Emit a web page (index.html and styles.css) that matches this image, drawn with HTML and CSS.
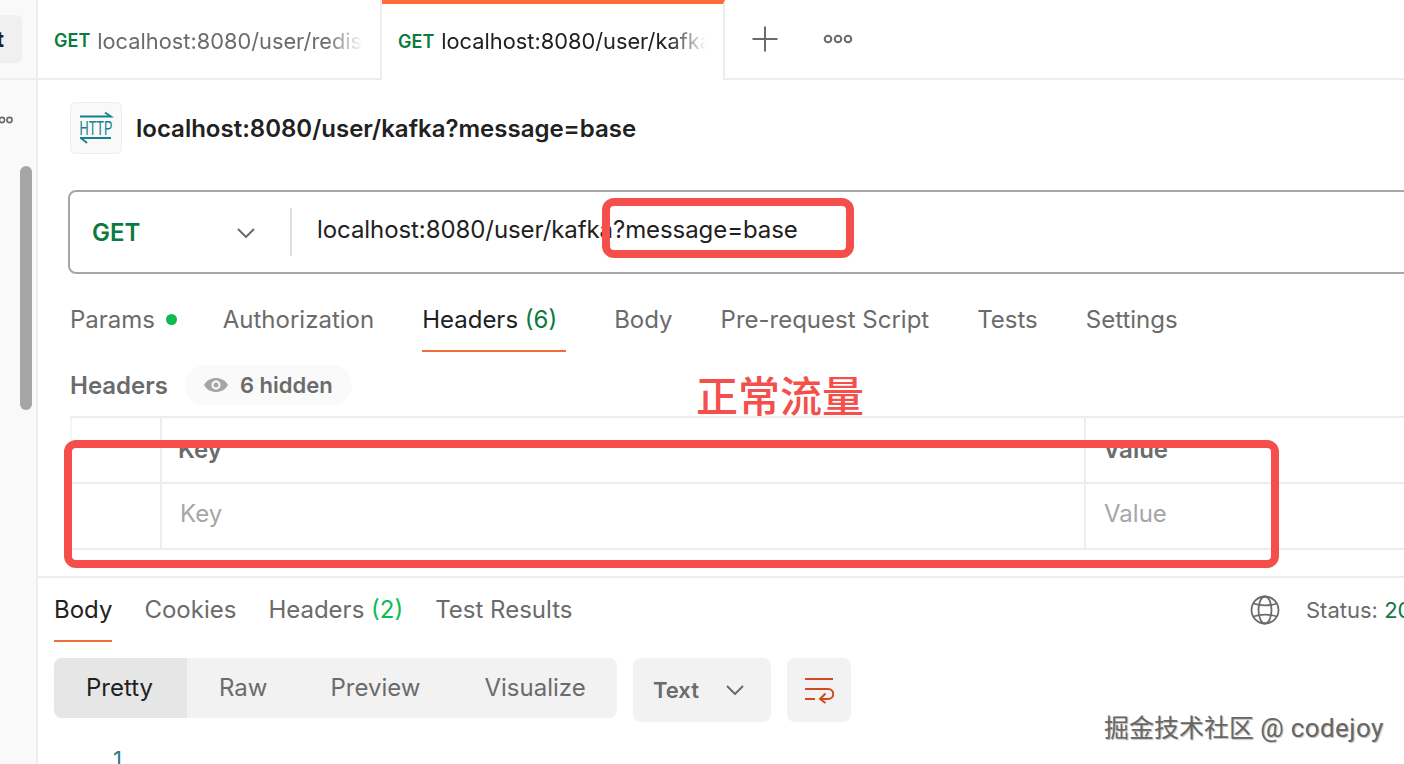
FILE: index.html
```html
<!DOCTYPE html>
<html lang="en">
<head>
  <meta charset="UTF-8">
  <meta name="viewport" content="width=device-width, initial-scale=1.0">
  <title>localhost:8080/user/kafka?message=base</title>
  <link rel="stylesheet" href="styles.css">
</head>
<body>
  <div class="app">
    <aside class="sidebar">
      <div class="sidebar-top">
        <div class="new-btn"><span>t</span></div>
      </div>
      <div class="sidebar-dots">
        <svg width="14" height="10" viewBox="0 0 14 10"><circle cx="2" cy="5" r="2.600"/><circle cx="9.500" cy="5" r="2.600"/></svg>
      </div>
      <div class="sidebar-thumb"></div>
    </aside>

    <main class="main">
      <div class="tabs">
        <div class="tab">
          <span class="tab-method">GET</span>
          <span class="tab-url">localhost:8080/user/redis</span>
        </div>
        <div class="tab tab-active">
          <span class="tab-method">GET</span>
          <span class="tab-url">localhost:8080/user/kafka</span>
        </div>
        <div class="tab-tools">
          <svg class="plus-icon" width="28" height="28" viewBox="0 0 28 28"><path d="M14 1.500V26.500M1.500 14H26.500"/></svg>
          <svg class="more-icon" width="30" height="12" viewBox="0 0 30 12"><circle cx="5" cy="6" r="3.300"/><circle cx="15" cy="6" r="3.300"/><circle cx="25" cy="6" r="3.300"/></svg>
        </div>
      </div>

      <div class="request-title">
        <div class="http-icon">
          <svg width="36" height="34" viewBox="0 0 36 34">
            <path d="M2 5.500H33L27 1.500M2 27H33M3 27L9 32"/>
            <text x="18" y="23.500" text-anchor="middle" textLength="33" lengthAdjust="spacingAndGlyphs">HTTP</text>
          </svg>
        </div>
        <h1>localhost:8080/user/kafka?message=base</h1>
      </div>

      <div class="url-bar">
        <div class="method-select">
          <span>GET</span>
          <svg class="chevron" width="18" height="10" viewBox="0 0 18 10"><path d="M1 1L9 9L17 1"/></svg>
        </div>
        <div class="url-text">localhost:8080/user/kafka?message=base</div>
      </div>

      <nav class="req-tabs">
        <span class="req-tab params-tab">Params <i class="green-dot"></i></span>
        <span class="req-tab">Authorization</span>
        <span class="req-tab req-tab-active">Headers <em>(6)</em></span>
        <span class="req-tab">Body</span>
        <span class="req-tab">Pre-request Script</span>
        <span class="req-tab">Tests</span>
        <span class="req-tab">Settings</span>
      </nav>

      <div class="headers-bar">
        <strong>Headers</strong>
        <div class="hidden-pill">
          <svg width="26" height="16" viewBox="0 0 26 16"><path class="eye-body" fill-rule="evenodd" d="M1 8C4 3 8 1 13 1S22 3 25 8C22 13 18 15 13 15S4 13 1 8ZM13 3.500A4.500 4.500 0 1 0 13 12.500A4.500 4.500 0 1 0 13 3.500Z"/><circle class="eye-body" cx="13" cy="8" r="2.500"/></svg>
          <span>6 hidden</span>
        </div>
      </div>

      <div class="kv-table">
        <div class="kv-row kv-head">
          <div class="kv-cell"></div>
          <div class="kv-cell key-head">Key</div>
          <div class="kv-cell value-head">Value</div>
        </div>
        <div class="kv-row kv-empty">
          <div class="kv-cell"></div>
          <div class="kv-cell key-input">Key</div>
          <div class="kv-cell value-input">Value</div>
        </div>
      </div>

      <section class="response">
        <div class="res-top">
          <nav class="res-tabs">
            <span class="res-tab res-tab-active">Body</span>
            <span class="res-tab">Cookies</span>
            <span class="res-tab">Headers <em>(2)</em></span>
            <span class="res-tab">Test Results</span>
          </nav>
          <div class="res-status">
            <svg class="globe" width="30" height="30" viewBox="0 0 30 30"><circle cx="15" cy="15" r="13.500"/><ellipse cx="15" cy="15" rx="6.500" ry="13.500"/><path d="M3.500 8.500C10 11 20 11 26.500 8.500M3.500 21.500C10 19 20 19 26.500 21.500"/></svg>
            <span>Status: <b>200 OK</b></span>
          </div>
        </div>
        <div class="res-tools">
          <div class="segments">
            <span class="segment segment-active">Pretty</span>
            <span class="segment raw-seg">Raw</span>
            <span class="segment preview-seg">Preview</span>
            <span class="segment">Visualize</span>
          </div>
          <div class="format-select">
            <span>Text</span>
            <svg class="chevron" width="18" height="10" viewBox="0 0 18 10"><path d="M1 1L9 9L17 1"/></svg>
          </div>
          <div class="wrap-btn">
            <svg width="30" height="28" viewBox="0 0 30 28"><path d="M1 3H29M1 13H24C31 13 31 23 24 23H16M21.500 17.500L16 23L21.500 27M1 23H11"/></svg>
          </div>
        </div>
        <div class="code-line">1</div>
      </section>
    </main>

    <div class="mark mark-query"></div>
    <div class="mark mark-table"></div>
    <div class="note">正常流量</div>
    <div class="watermark">掘金技术社区 <span>@ codejoy</span></div>
  </div>
</body>
</html>
```

FILE: styles.css
```css
* {
  box-sizing: border-box;
}
body {
  margin: 0;
  font-family: Inter, "Noto Sans CJK SC", sans-serif;
  color: #212121;
  background-color: #fff;
}
.app {
  position: relative;
  display: flex;
  width: 1404px;
  height: 764px;
  overflow: hidden;
}

/* left sidebar */
.sidebar {
  position: relative;
  flex: 0 0 38px;
  background-color: #f9f9f9;
  border-right: 2px solid #ededed;
}
.sidebar-top {
  height: 80px;
  padding-top: 15px;
  border-bottom: 2px solid #ededed;
}
.new-btn {
  width: 22px;
  height: 48px;
  background-color: #f0f0f0;
  border-radius: 0 6px 6px 0;
  font-size: 22px;
  font-weight: 700;
  line-height: 48px;
  overflow: hidden;
}
.new-btn span {
  margin-left: -4px;
}
.sidebar-dots {
  height: 10px;
  margin-top: 35px;
}
.sidebar-dots svg {
  display: block;
  fill: none;
  stroke: #6b6b6b;
  stroke-width: 1.600;
}
.sidebar-thumb {
  width: 12px;
  height: 244px;
  margin: 41px 0 0 20px;
  background-color: #a6a6a6;
  border-radius: 6px;
}

.main {
  flex: 1;
  min-width: 0;
}

/* tab strip */
.tabs {
  display: flex;
  height: 80px;
}
.tab {
  display: flex;
  align-items: center;
  gap: 7px;
  flex: 0 0 344px;
  min-width: 0;
  padding: 3px 17px 0 16px;
  border-right: 2px solid #ededed;
  border-bottom: 2px solid #ededed;
  color: #6b6b6b;
}
.tab-active {
  flex-basis: 343px;
  border-top: 4px solid #ff6c37;
  border-bottom: 0;
  padding-top: 0;
  padding-bottom: 2px;
  color: #212121;
}
.tab-method {
  font-size: 18px;
  font-weight: 600;
  color: #0b7a3e;
}
.tab-url {
  flex: 1;
  min-width: 0;
  font-size: 21.800px;
  white-space: nowrap;
  overflow: hidden;
  -webkit-mask-image: linear-gradient(to right, #000 86%, transparent 100%);
  mask-image: linear-gradient(to right, #000 86%, transparent 100%);
}
.tab-tools {
  display: flex;
  align-items: center;
  gap: 44px;
  flex: 1;
  padding: 0 0 0 26px;
  border-bottom: 2px solid #ededed;
}
.plus-icon path {
  fill: none;
  stroke: #6b6b6b;
  stroke-width: 2;
}
.more-icon {
  fill: none;
  stroke: #6b6b6b;
  stroke-width: 2;
}

/* request name */
.request-title {
  display: flex;
  align-items: center;
  gap: 14px;
  padding: 22px 0 0 32px;
}
.http-icon {
  display: flex;
  align-items: center;
  justify-content: center;
  width: 52px;
  height: 52px;
  background-color: #f9f9f9;
  border: 1px solid #ededed;
  border-radius: 6px;
}
.http-icon path {
  fill: none;
  stroke: #13818f;
  stroke-width: 1.800;
}
.http-icon text {
  font-family: "Liberation Sans", sans-serif;
  font-size: 20px;
  fill: #13818f;
}
h1 {
  margin: 0;
  font-size: 24px;
  font-weight: 600;
}

/* url input */
.url-bar {
  display: flex;
  align-items: center;
  width: 1400px;
  height: 84px;
  margin: 36px 0 0 30px;
  border: 2px solid #a6a6a6;
  border-radius: 8px;
}
.method-select {
  display: flex;
  align-items: center;
  justify-content: space-between;
  width: 222px;
  height: 48px;
  padding: 1px 35px 0 22px;
  border-right: 2px solid #e0e0e0;
  font-size: 24px;
  font-weight: 600;
  color: #0b7a3e;
}
.chevron path {
  fill: none;
  stroke: #6b6b6b;
  stroke-width: 2;
}
.url-text {
  padding: 0 0 5px 25px;
  font-size: 24px;
  letter-spacing: -0.08px;
}

/* request tabs */
.req-tabs {
  display: flex;
  height: 63px;
  margin-top: 15px;
  padding-left: 32px;
}
.req-tab {
  margin-right: 48px;
  padding-top: 16px;
  font-size: 24px;
  color: #6b6b6b;
}
.req-tab em, .res-tab em {
  font-style: normal;
  color: #0cbb52;
}
.req-tab em {
  color: #0b7a3e;
}
.req-tab-active {
  width: 144px;
  color: #212121;
  border-bottom: 2px solid #f26b3a;
}
.params-tab {
  margin-right: 46px;
}
.green-dot {
  display: inline-block;
  width: 11px;
  height: 11px;
  margin: 0 0 3px 4px;
  background-color: #0cbb52;
  border-radius: 50%;
}

.headers-bar {
  display: flex;
  align-items: center;
  gap: 17px;
  height: 40px;
  margin-top: 13px;
  padding-left: 32px;
  font-size: 24px;
  color: #6b6b6b;
}
.headers-bar strong {
  font-weight: 600;
}
.hidden-pill {
  display: flex;
  align-items: center;
  gap: 11px;
  height: 40px;
  padding: 0 19px 0 18px;
  background-color: #fafafa;
  border-radius: 20px;
  font-size: 22px;
  font-weight: 600;
}
.eye-body {
  fill: #a6a6a6;
}

/* key value table */
.kv-table {
  margin: 11px 0 0 32px;
  border-top: 2px solid #ededed;
}
.kv-row {
  display: grid;
  grid-template-columns: 90px 924px 1fr;
  height: 66px;
  border-bottom: 2px solid #ededed;
}
.kv-cell {
  display: flex;
  align-items: center;
  padding-left: 17px;
  border-left: 2px solid #ededed;
  font-size: 24px;
}
.kv-cell:first-child {
  border-left: 2px solid #f5f5f5;
}
.kv-head .kv-cell {
  padding-bottom: 2px;
}
.kv-empty .kv-cell {
  padding-bottom: 6px;
}
.key-head, .value-head {
  font-weight: 600;
  color: #6b6b6b;
}
.key-head {
  padding-left: 16px;
}
.key-input, .value-input {
  padding-left: 18px;
  color: #a6a6a6;
}

/* response */
.response {
  margin-top: 26px;
  border-top: 2px solid #ededed;
}
.res-top {
  display: flex;
  justify-content: space-between;
  height: 64px;
  padding-left: 16px;
}
.res-tabs {
  display: flex;
  gap: 32px;
}
.res-tab {
  padding-top: 17px;
  font-size: 24px;
  color: #6b6b6b;
}
.res-tab-active {
  color: #212121;
  border-bottom: 2px solid #f26b3a;
}
.res-status {
  display: flex;
  align-items: center;
  gap: 26px;
  width: 154px;
  flex-shrink: 0;
  font-size: 22px;
  white-space: nowrap;
  color: #6b6b6b;
}
.res-status b {
  font-weight: 400;
  color: #0b7a3e;
}
.globe {
  flex-shrink: 0;
  fill: none;
  stroke: #6b6b6b;
  stroke-width: 1.800;
}
.res-tools {
  display: flex;
  align-items: flex-start;
  margin-top: 16px;
  padding-left: 16px;
}
.segments {
  display: flex;
  width: 563px;
  height: 60px;
  background-color: #f2f2f2;
  border-radius: 8px;
  overflow: hidden;
  font-size: 24px;
  color: #6b6b6b;
}
.segment {
  flex-shrink: 0;
  padding: 15px 32px 0;
}
.segment-active {
  width: 133px;
  color: #212121;
  background-color: #e6e6e6;
}
.raw-seg {
  padding-right: 31px;
}
.preview-seg {
  padding-right: 32px;
}
.format-select {
  display: flex;
  align-items: center;
  justify-content: space-between;
  width: 138px;
  height: 64px;
  margin-left: 16px;
  padding: 0 27px 0 20px;
  background-color: #f2f2f2;
  border-radius: 8px;
  font-size: 22px;
  font-weight: 600;
  color: #6b6b6b;
}
.wrap-btn {
  display: flex;
  align-items: center;
  justify-content: center;
  width: 64px;
  height: 64px;
  margin-left: 16px;
  background-color: #f2f2f2;
  border-radius: 8px;
}
.wrap-btn path {
  fill: none;
  stroke: #d2491f;
  stroke-width: 2;
}
.code-line {
  margin: 24px 0 0 75px;
  font-size: 22px;
  color: #2a7a90;
}

/* red marks drawn over the screenshot */
.mark {
  position: absolute;
  border: 8px solid #f44f4a;
  border-radius: 12px;
}
.mark-query {
  left: 602px;
  top: 198px;
  width: 252px;
  height: 60px;
}
.mark-table {
  left: 64px;
  top: 440px;
  width: 1215px;
  height: 128px;
}
.note {
  position: absolute;
  left: 696px;
  top: 372px;
  font-size: 42px;
  font-weight: 500;
  line-height: 50px;
  color: #f44f4a;
}
.watermark {
  position: absolute;
  left: 1104px;
  top: 713px;
  font-family: Roboto, "Noto Sans CJK SC", sans-serif;
  font-size: 25px;
  line-height: 30px;
  color: #666;
  text-shadow: 1px 1px 1px #bbb;
}
.watermark span {
  font-size: 26px;
  letter-spacing: 0.4px;
}
```
